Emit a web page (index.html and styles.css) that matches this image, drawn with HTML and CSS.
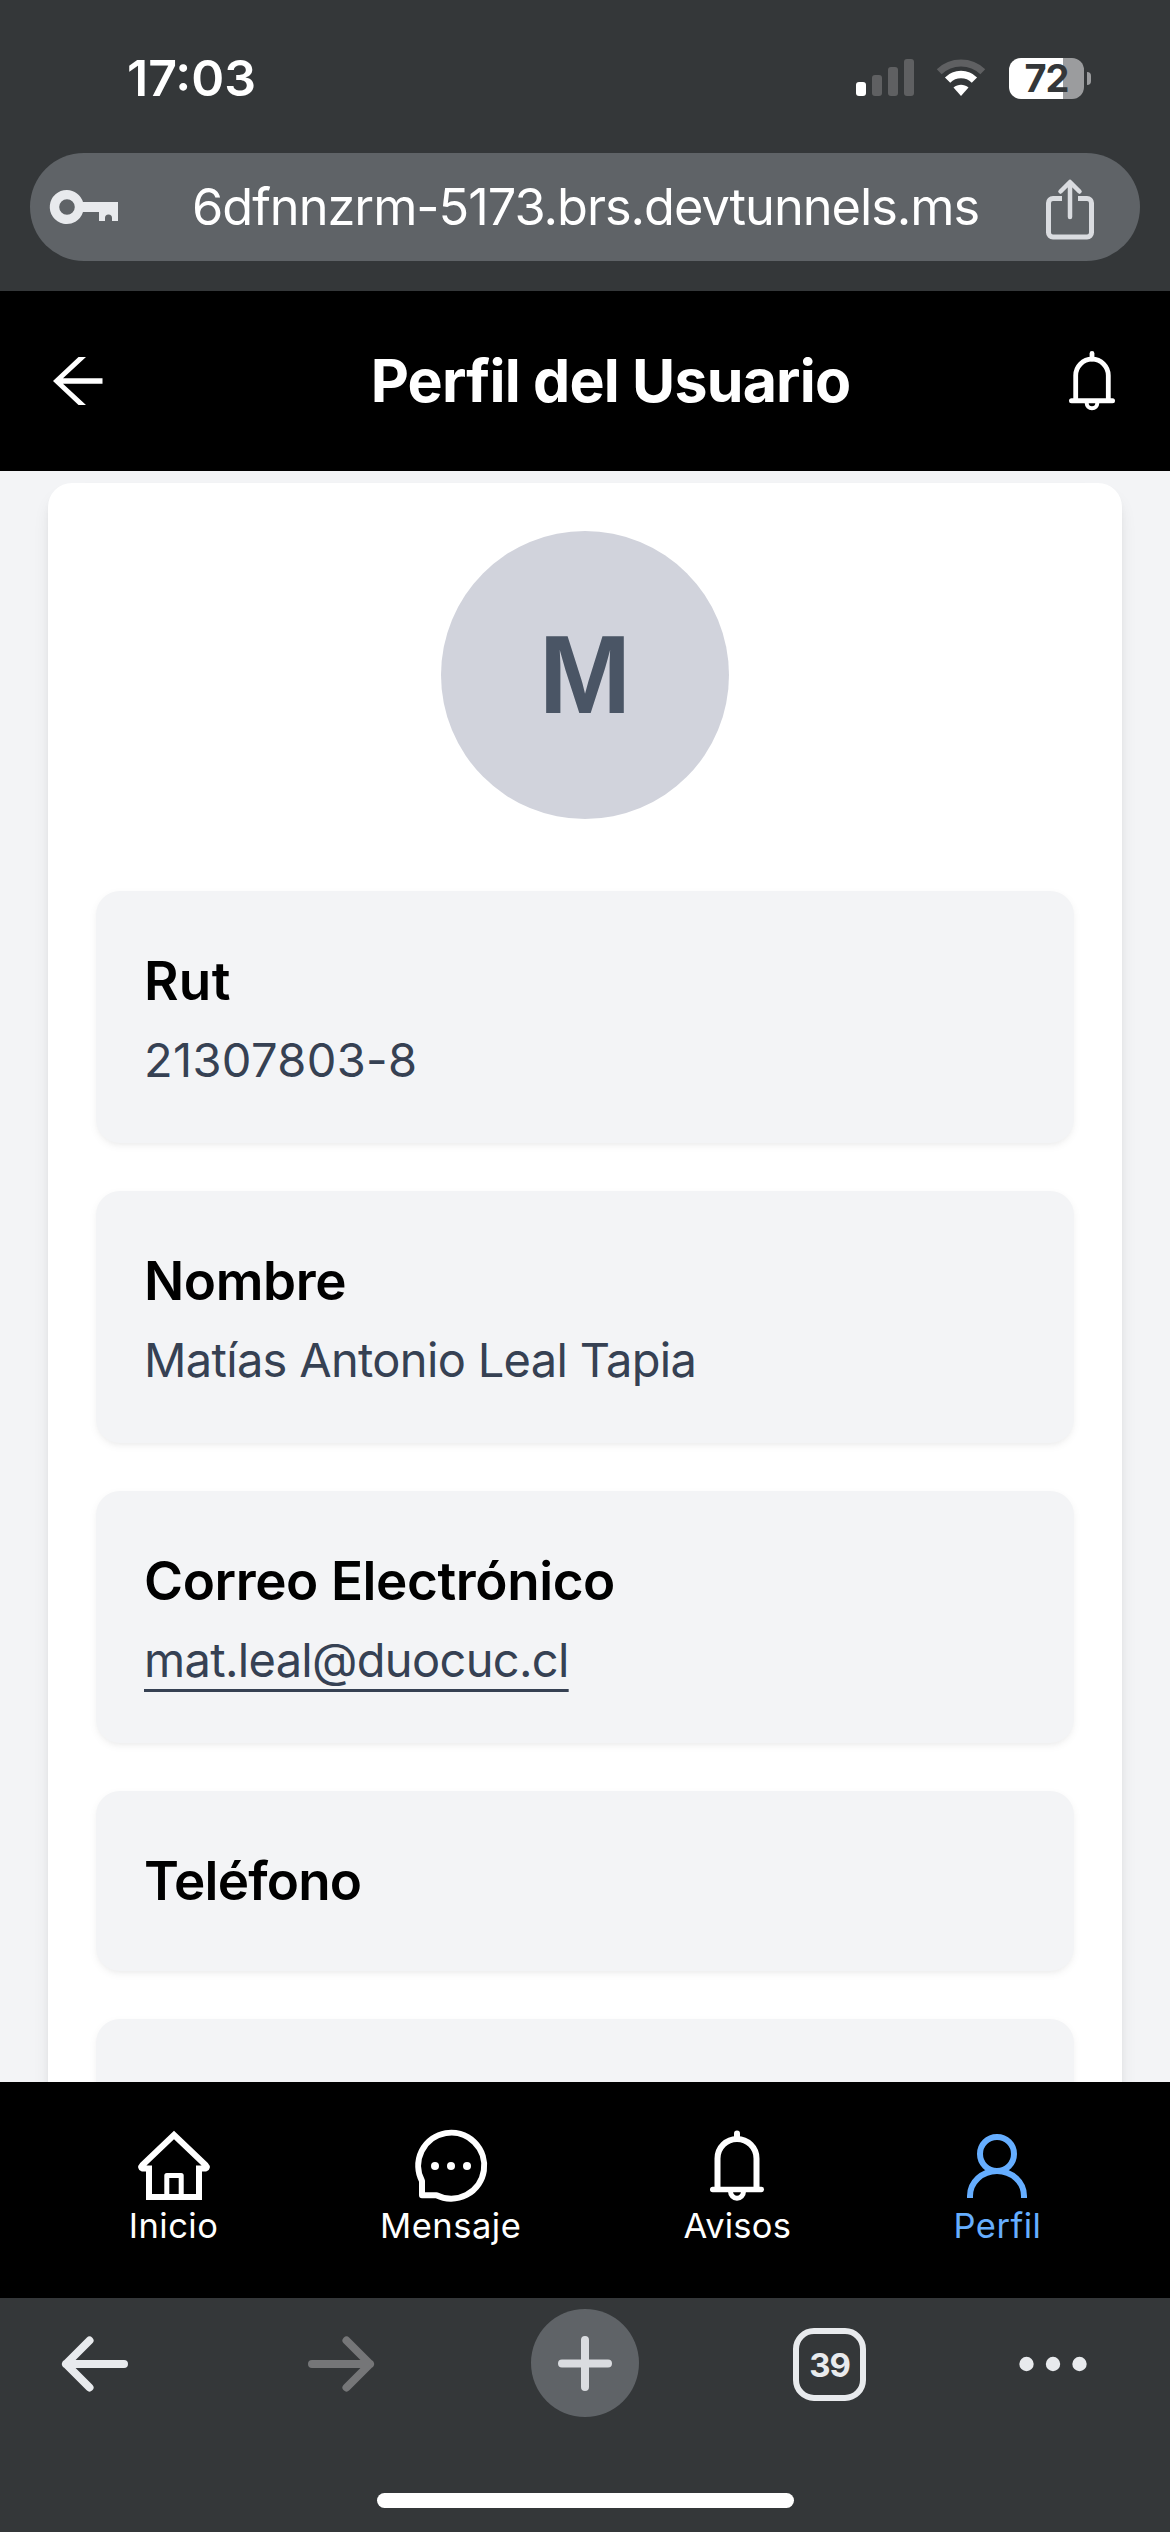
FILE: index.html
```html
<!DOCTYPE html>
<html lang="es">
<head>
<meta charset="utf-8">
<title>Perfil del Usuario</title>
<link rel="stylesheet" href="styles.css">
</head>
<body>
<div class="screen">
  <div class="browser-top">
    <div class="status-bar">
      <span class="time">17:03</span>
      <div class="status-icons">
        <svg class="signal" width="58" height="38" viewBox="0 0 58 38">
          <rect x="0" y="23" width="10" height="14" rx="3" fill="#fff"/>
          <g fill="#5f6062"><rect x="16" y="16" width="10" height="21" rx="3"/><rect x="32" y="8" width="10" height="29" rx="3"/><rect x="48" y="0" width="10" height="37" rx="3"/></g>
        </svg>
        <svg class="wifi" width="50" height="38" viewBox="0 0 50 38">
          <path d="M3.2 12.7A31.5 31.5 0 0 1 46.800 12.700" fill="none" stroke="#5f6062" stroke-width="7"/>
          <path d="M11.600 21.100A19 19 0 0 1 38.400 21.100" fill="none" stroke="#fff" stroke-width="7.500"/>
          <path d="M17.500 28.500C22 24.800 28 24.800 32.500 28.500L25 37Z" fill="#fff"/>
        </svg>
        <div class="battery"><span class="battery-level">72</span><i class="battery-cap"></i></div>
      </div>
    </div>
    <div class="url-bar">
      <svg class="key" width="68" height="36" viewBox="0 0 68 36">
        <path fill-rule="evenodd" fill="#e8eaed" d="M17 1a17 17 0 0 1 16 12h35v19h-6v-3a3.500 3.500 0 0 0-7 0v3h-6V23H33A17 17 0 1 1 17 1ZM17 10.200a7.800 7.800 0 1 0 0 15.600a7.800 7.800 0 0 0 0-15.600Z"/>
      </svg>
      <span class="url">6dfnnzrm-5173.brs.devtunnels.ms</span>
      <svg class="share" width="48" height="60" viewBox="0 0 48 60" fill="none" stroke="#dadce0" stroke-width="5" stroke-linecap="round" stroke-linejoin="round">
        <path d="M16 19.500H7a4.500 4.500 0 0 0-4.500 4.500V53.500A4.500 4.500 0 0 0 7 58H41A4.500 4.500 0 0 0 45.500 53.500V24A4.500 4.500 0 0 0 41 19.500H32" stroke-linecap="butt"/>
        <path d="M24 38V4M14.500 12.500L24 3L33.500 12.500" stroke-width="4.500"/>
      </svg>
    </div>
  </div>

  <header class="app-bar">
    <svg class="back" width="50" height="48" viewBox="0 0 50 48" fill="#fff">
      <path d="M0 24L25.500 0H33L10 21.200H49.500V26.800H10L33 48H25.500Z"/>
    </svg>
    <h1 class="title">Perfil del Usuario</h1>
    <svg class="bell" width="46" height="60" viewBox="0 0 46 60" fill="none" stroke="#fff" stroke-width="4.800">
      <path d="M23 2.500V8" stroke-linecap="round"/>
      <path d="M6.700 49V24.500a16.300 16.300 0 0 1 32.600 0V49"/>
      <path d="M2.500 49.700H43.500" stroke-linecap="round" stroke-width="5"/>
      <path d="M17.700 51.500V52a5.300 5.300 0 0 0 10.600 0V51.500" stroke-width="4"/>
    </svg>
  </header>

  <main class="content">
    <section class="card">
      <div class="avatar">M</div>
      <div class="fields">
        <div class="field"><h2 class="label label-rut">Rut</h2><p class="value value-rut">21307803-8</p></div>
        <div class="field"><h2 class="label">Nombre</h2><p class="value">Matías Antonio Leal Tapia</p></div>
        <div class="field"><h2 class="label">Correo Electrónico</h2><p class="value"><span class="email">mat.leal@duocuc.cl</span></p></div>
        <div class="field"><h2 class="label label-phone">Teléfono</h2></div>
        <div class="field field-next"></div>
      </div>
    </section>
  </main>

  <nav class="tab-bar">
    <div class="tab tab-home">
      <svg width="72" height="72" viewBox="0 0 72 72" fill="none" stroke="#fff" stroke-width="6" stroke-linejoin="round">
        <path d="M11 67V38.500H4.500Q2 37.500 4 35.500L36 5L68 35.500Q70 37.500 67.500 38.500H61V67Z" stroke-linejoin="miter"/>
        <path d="M28.800 65V45.500H43.200V65" stroke-width="5"/>
      </svg>
      <span>Inicio</span>
    </div>
    <div class="tab tab-message">
      <svg width="72" height="72" viewBox="0 0 72 72" fill="none" stroke="#fff" stroke-width="6" stroke-linejoin="round">
        <path d="M7 51A33 33 0 1 1 21.500 65.200H7Z"/>
        <g fill="#fff" stroke="none"><circle cx="20" cy="36" r="4"/><circle cx="36" cy="36" r="4"/><circle cx="52" cy="36" r="4"/></g>
      </svg>
      <span>Mensaje</span>
    </div>
    <div class="tab tab-alerts">
      <svg width="54" height="72" viewBox="0 0 54 72" fill="none" stroke="#fff" stroke-width="6">
        <path d="M27 3.500V9" stroke-linecap="round"/>
        <path d="M7.500 59V28.500a19.500 19.500 0 0 1 39 0V59"/>
        <path d="M2.700 59.500H51.300" stroke-linecap="round" stroke-width="5.400"/>
        <path d="M20.500 61.500a6.500 6.700 0 0 0 13 0" stroke-width="5"/>
      </svg>
      <span>Avisos</span>
    </div>
    <div class="tab tab-profile">
      <svg width="60" height="72" viewBox="0 0 60 72" fill="none" stroke="#66aeff" stroke-width="6">
        <circle cx="30" cy="24" r="17"/>
        <path d="M3 68V66a27 25 0 0 1 54 0V68"/>
      </svg>
      <span>Perfil</span>
    </div>
  </nav>

  <footer class="browser-bottom">
    <div class="tools">
      <svg class="tool-back" width="68" height="56" viewBox="0 0 68 56" fill="none" stroke="#e8eaed" stroke-width="8" stroke-linecap="round" stroke-linejoin="round"><path d="M63 28H5M28.500 4.500L5 28L28.500 51.500"/></svg>
      <svg class="tool-forward" width="68" height="56" viewBox="0 0 68 56" fill="none" stroke="#757678" stroke-width="8" stroke-linecap="round" stroke-linejoin="round"><path d="M5 28H63M39.500 4.500L63 28L39.500 51.500"/></svg>
      <div class="new-tab"><svg width="54" height="55" viewBox="0 0 54 55" fill="none" stroke="#dadce0" stroke-width="8" stroke-linecap="round"><path d="M27 4V51M4 27.500H50"/></svg></div>
      <div class="tab-count">39</div>
      <svg class="more" width="68" height="16" viewBox="0 0 68 16" fill="#e8eaed"><circle cx="7.500" cy="8" r="7.200"/><circle cx="34" cy="8" r="7.200"/><circle cx="60.500" cy="8" r="7.200"/></svg>
    </div>
    <div class="home-indicator"></div>
  </footer>
</div>
</body>
</html>
```
FILE: styles.css
```css
* { box-sizing: border-box; margin: 0; padding: 0; }
body { width: 1170px; height: 2532px; overflow: hidden; font-family: Inter, "Liberation Sans", sans-serif; }
svg { display: block; flex: none; overflow: visible; }
span, h1, h2, p { white-space: nowrap; }
.screen { width: 1170px; height: 2532px; display: flex; flex-direction: column; }

/* Browser chrome, top */
.browser-top { height: 291px; flex: none; background: #343739; }
.status-bar { height: 153px; padding: 3px 86px 0 127px; display: flex; justify-content: space-between; align-items: center; }
.time { color: #fff; font-size: 50px; font-weight: 600; letter-spacing: 0; }
.status-icons { display: flex; align-items: center; }
.wifi { margin-left: 22px; }
.battery { position: relative; width: 75px; height: 41px; margin-left: 23px; border-radius: 12px; background: linear-gradient(90deg, #fff 54px, #9b9c9e 54px); display: flex; align-items: center; justify-content: center; }
.battery-level { color: #343739; font-size: 38px; font-weight: 700; line-height: 41px; letter-spacing: -1px; }
.battery-cap { position: absolute; left: 78px; top: 14px; width: 4px; height: 13px; border-radius: 0 4px 4px 0; background: #9b9c9e; }
.url-bar { height: 108px; margin: 0 30px; padding: 0 46px 0 20px; border-radius: 54px; background: #5f6367; display: flex; align-items: center; }
.url { flex: 1; margin-left: 74px; color: #fff; font-size: 50.500px; line-height: 106px; letter-spacing: -1.02px; }
.share { margin-top: 4px; }

/* Page header */
.app-bar { height: 180px; flex: none; padding: 0 55px 0 53px; background: #000; color: #fff; display: flex; align-items: center; justify-content: space-between; }
.title { margin-left: 49px; font-size: 59px; font-weight: 700; line-height: 84px; letter-spacing: -0.8px; }

/* Profile card */
.content { height: 1611px; flex: none; overflow: hidden; background: #f3f4f6; padding: 12px 48px 0; }
.card { height: 1800px; padding: 48px 48px 0; background: #fff; border-radius: 24px; box-shadow: 0 12px 18px -3px rgba(0,0,0,.1), 0 6px 12px -6px rgba(0,0,0,.1); }
.avatar { width: 288px; height: 288px; margin: 0 auto; border-radius: 50%; background: #d1d3dc; color: #4a5565; font-family: "Liberation Sans", Arial, sans-serif; font-size: 111px; font-weight: 700; line-height: 288px; text-align: center; }
.fields { margin-top: 72px; display: flex; flex-direction: column; gap: 48px; }
.field { padding: 48px; border-radius: 24px; background: #f3f4f6; box-shadow: 0 3px 9px rgba(0,0,0,.05), 0 3px 6px -3px rgba(0,0,0,.05); }
.field-next { height: 252px; }
.label { color: #000; font-size: 53px; font-weight: 600; line-height: 84px; letter-spacing: -0.4px; }
.label-rut { letter-spacing: 0.3px; }
.label-phone { letter-spacing: -0.8px; }
.value { margin-bottom: -2px; color: #364153; font-size: 47px; font-weight: 400; line-height: 74px; letter-spacing: -0.68px; }
.value-rut { letter-spacing: 0.35px; }
.email { text-decoration: underline; text-decoration-thickness: 3px; text-underline-offset: 12px; text-decoration-skip-ink: none; }

/* Page navigation */
.tab-bar { height: 216px; flex: none; padding: 48px 129px 0; background: #000; color: #fff; display: flex; justify-content: space-between; }
.tab { display: flex; flex-direction: column; align-items: center; font-size: 34.500px; line-height: 48px; letter-spacing: 0.5px; }
.tab-home { width: 89px; }
.tab-message { width: 140px; }
.tab-alerts { width: 108px; letter-spacing: 0.2px; }
.tab-profile { width: 87px; color: #66aeff; }

/* Browser chrome, bottom */
.browser-bottom { height: 234px; flex: none; background: #343739; }
.tools { height: 132px; padding: 0 83px 0 61px; display: flex; align-items: center; }
.tool-forward { margin-left: 178px; }
.new-tab { width: 108px; height: 108px; flex: none; margin-left: 156px; margin-top: -2px; border-radius: 50%; background: #5f6367; display: flex; align-items: center; justify-content: center; }
.tab-count { width: 73px; height: 73px; flex: none; margin-left: 154px; border: 6.500px solid #e8eaed; border-radius: 21px; color: #e8eaed; font-size: 33px; font-weight: 700; line-height: 62px; text-align: center; letter-spacing: -1px; }
.more { margin-left: 153px; }
.home-indicator { width: 417px; height: 15px; margin: 63px 0 0 377px; border-radius: 8px; background: #fff; }
```
